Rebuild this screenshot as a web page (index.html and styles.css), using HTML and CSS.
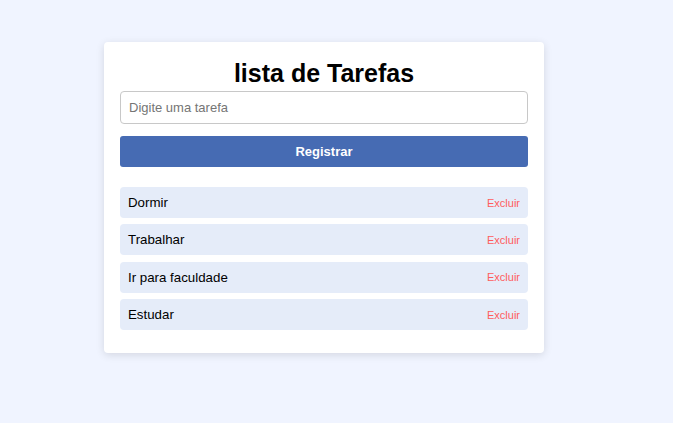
FILE: index.html
```html
<!DOCTYPE html>
<html lang="pt">
<head>
<meta charset="utf-8">
<link rel="stylesheet" href="styles.css">
</head>
<body>
<div class="card">
  <h1 class="title">lista de Tarefas</h1>
  <input class="field" type="text" placeholder="Digite uma tarefa">
  <button class="btn">Registrar</button>
  <ul class="list">
    <li class="item"><span>Dormir</span><button class="del">Excluir</button></li>
    <li class="item"><span>Trabalhar</span><button class="del">Excluir</button></li>
    <li class="item"><span>Ir para faculdade</span><button class="del">Excluir</button></li>
    <li class="item"><span>Estudar</span><button class="del">Excluir</button></li>
  </ul>
</div>
</body>
</html>
```
FILE: styles.css
```css
html, body { margin: 0; padding: 0; }
body {
  background: #f0f4ff;
  font-family: "Liberation Sans", Arial, sans-serif;
  height: 423px;
  overflow: hidden;
}
.card {
  box-sizing: border-box;
  width: 440px;
  margin: 42px 0 0 104px;
  background: #fff;
  border-radius: 4px;
  padding: 16px 16px 23px;
  box-shadow: 0 2px 8px rgba(0,0,0,0.12);
  display: flex;
  flex-direction: column;
}
.title {
  margin: 0 0 3px;
  text-align: center;
  font-size: 25px;
  line-height: 30px;
  font-weight: bold;
  color: #000;
}
.field {
  box-sizing: border-box;
  height: 33px;
  width: 100%;
  border: 1px solid #c8c8c8;
  border-radius: 4px;
  padding: 0 8px;
  font-family: "Liberation Sans", Arial, sans-serif;
  font-size: 13px;
  color: #000;
  outline: none;
}
.field::placeholder { color: #757575; }
.btn {
  margin-top: 12px;
  height: 31px;
  border: none;
  border-radius: 3px;
  background: #466bb3;
  color: #fff;
  font-family: "Liberation Sans", Arial, sans-serif;
  font-weight: bold;
  font-size: 13px;
}
.list {
  list-style: none;
  margin: 20px 0 0;
  padding: 0;
  display: flex;
  flex-direction: column;
  gap: 6.4px;
}
.item {
  box-sizing: border-box;
  height: 31px;
  background: #e5ecf9;
  border-radius: 4px;
  padding: 0 8px;
  display: flex;
  align-items: center;
  justify-content: space-between;
  font-size: 13.3px;
  color: #000;
}
.del {
  border: none;
  background: none;
  padding: 0;
  color: #ff5c5c;
  font-family: "Liberation Sans", Arial, sans-serif;
  font-size: 11px;
}
```
